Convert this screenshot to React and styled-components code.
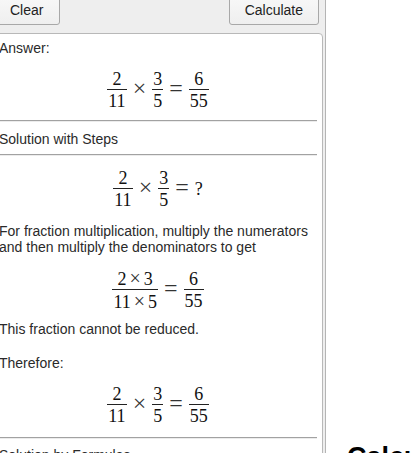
import React from "react";
import styled, { createGlobalStyle } from "styled-components";

const GlobalStyle = createGlobalStyle`
  html, body {
    margin: 0;
    padding: 0;
    overflow: hidden;
    background: #ffffff;
  }
  body {
    font-family: "Liberation Sans", Arial, sans-serif;
    color: #222222;
  }
`;

const Page = styled.div`
  display: flex;
  align-items: flex-start;
  height: 453px;
  overflow: hidden;
`;

const Panel = styled.div`
  flex: none;
  width: 330px;
  margin: -9px 0 0 -12px;
  padding: 3px 2px 0 4px;
  background: #eeeeee;
  border: 1px solid #b4b4b4;
  border-bottom: none;
  display: flex;
  flex-direction: column;
`;

const ButtonRow = styled.div`
  display: flex;
  justify-content: space-between;
  padding-right: 4px;
  margin-bottom: 8px;
`;

const Button = styled.button`
  height: 30px;
  padding: 0 ${(p) => p.$px || 15}px;
  font-family: "Liberation Sans", Arial, sans-serif;
  font-size: 14px;
  color: #222222;
  background: linear-gradient(#f8f8f8, #efefef);
  border: 1px solid #a8a8a8;
  border-radius: 3px;
  cursor: pointer;
`;

const ResultBox = styled.div`
  background: #ffffff;
  border: 1px solid #b8b8b8;
  border-radius: 0 4px 0 0;
  padding: 6px 5px 40px;
  display: flex;
  flex-direction: column;
`;

const Text = styled.p`
  margin: ${(p) => p.$mt || 0}px 0 0;
  font-size: 14px;
  line-height: 16px;
  color: #2a2a2a;
`;

const MathBlock = styled.div`
  margin: ${(p) => p.$mt || 0}px 0 0;
  display: flex;
  justify-content: center;
  align-items: center;
  gap: 6px;
  font-family: "Liberation Serif", "Times New Roman", serif;
  font-size: 18px;
  line-height: 18px;
  color: #111111;
`;

const Frac = styled.span`
  display: inline-flex;
  flex-direction: column;
  text-align: center;
`;

const Num = styled.span`
  padding: 0 1px 1px;
  border-bottom: 1px solid #222222;
  white-space: nowrap;
`;

const Den = styled.span`
  padding: 2px 1px 0;
  white-space: nowrap;
`;

const Op = styled.span`
  font-family: "Liberation Serif", "Times New Roman", serif;
  font-size: ${(p) => (p.$inner ? 20 : 24)}px;
  line-height: 18px;
  padding-bottom: ${(p) => (p.$inner ? 0 : 4)}px;
  color: #333333;
  margin: 0 ${(p) => (p.$inner ? 3 : 0)}px;
`;

const Sym = styled.span`
  font-family: "Liberation Serif", "Times New Roman", serif;
  font-size: 18px;
  line-height: 18px;
`;

const Rule = styled.div`
  margin-top: ${(p) => p.$mt || 0}px;
  border-top: 1px solid #a2a2a2;
  border-bottom: 1px solid #ececec;
`;

const Side = styled.aside`
  flex: 1;
  padding: 441px 0 0 21px;
`;

const SideHeading = styled.h2`
  margin: 0;
  font-family: "Liberation Sans", Arial, sans-serif;
  font-size: 27px;
  line-height: 32px;
  font-weight: bold;
  color: #000000;
  white-space: nowrap;
`;

const Fraction = ({ n, d }) => (
  <Frac>
    <Num>{n}</Num>
    <Den>{d}</Den>
  </Frac>
);

const Times = () => <Op>×</Op>;
const Eq = () => <Op>=</Op>;

const Product = () => (
  <>
    <Fraction n="2" d="11" />
    <Times />
    <Fraction n="3" d="5" />
    <Eq />
    <Fraction n="6" d="55" />
  </>
);

export default function App() {
  return (
    <>
      <GlobalStyle />
      <Page>
        <Panel>
          <ButtonRow>
            <Button $px={16}>Clear</Button>
            <Button>Calculate</Button>
          </ButtonRow>
          <ResultBox>
            <Text>Answer:</Text>
            <MathBlock $mt={14}>
              <Product />
            </MathBlock>
            <Rule $mt={10} />
            <Text $mt={9}>Solution with Steps</Text>
            <Rule $mt={7} />
            <MathBlock $mt={13}>
              <Fraction n="2" d="11" />
              <Times />
              <Fraction n="3" d="5" />
              <Eq />
              <Sym>?</Sym>
            </MathBlock>
            <Text $mt={14}>
              For fraction multiplication, multiply the numerators and then
              multiply the denominators to get
            </Text>
            <MathBlock $mt={14}>
              <Fraction
                n={
                  <>
                    2<Op $inner>×</Op>3
                  </>
                }
                d={
                  <>
                    11<Op $inner>×</Op>5
                  </>
                }
              />
              <Eq />
              <Fraction n="6" d="55" />
            </MathBlock>
            <Text $mt={10}>This fraction cannot be reduced.</Text>
            <Text $mt={18}>Therefore:</Text>
            <MathBlock $mt={14}>
              <Product />
            </MathBlock>
            <Rule $mt={12} />
            <Text $mt={8}>Solution by Formulas</Text>
          </ResultBox>
        </Panel>
        <Side>
          <SideHeading>Calculator Use</SideHeading>
        </Side>
      </Page>
    </>
  );
}
